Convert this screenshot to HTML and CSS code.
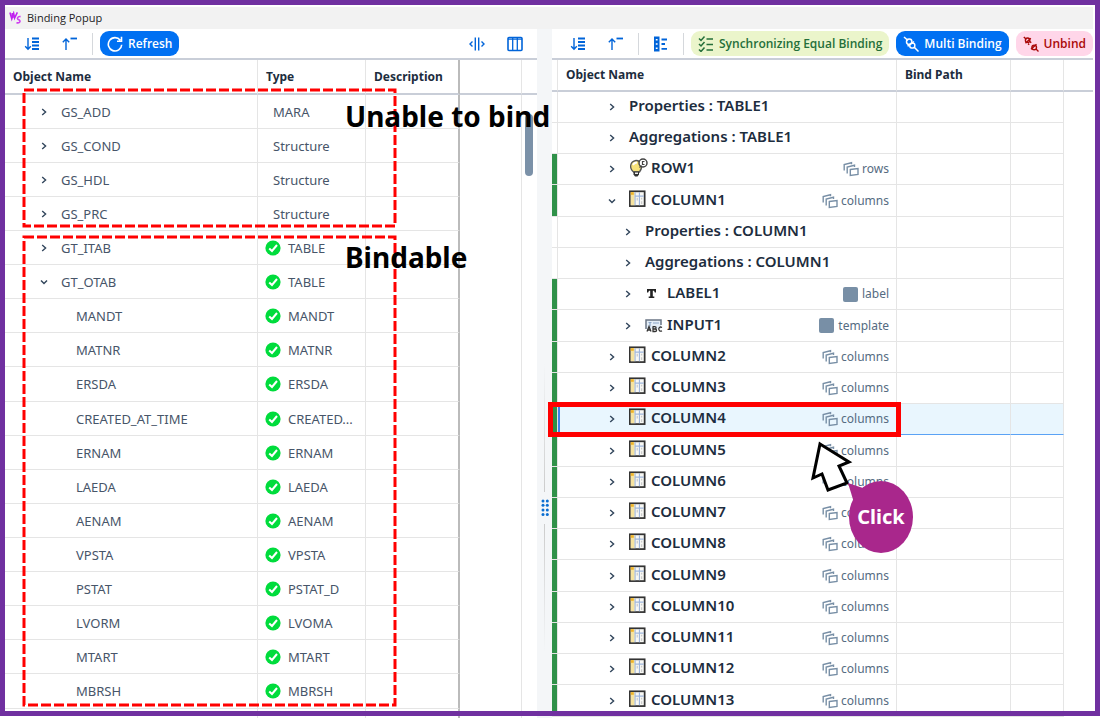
FILE: index.html
```html
<!DOCTYPE html>
<html lang="en">
<head>
<meta charset="utf-8">
<title>Binding Popup</title>
<link rel="stylesheet" href="styles.css">
</head>
<body>
<svg class="defs" aria-hidden="true">
  <symbol id="right" viewBox="0 0 8 8"><path d="M2.2 1 5.6 4 2.2 7" fill="none" stroke="currentColor" stroke-width="1.4"/></symbol>
  <symbol id="down" viewBox="0 0 8 8"><path d="M1 2.4 4 5.6 7 2.4" fill="none" stroke="currentColor" stroke-width="1.4"/></symbol>
  <symbol id="ok" viewBox="0 0 16 16"><circle cx="8" cy="8" r="7.6" fill="#00dc3c"/><path d="M4.2 8.4 7 11l5-6" fill="none" stroke="#fff" stroke-width="2"/></symbol>
  <symbol id="expand" viewBox="0 0 16 16"><g fill="none" stroke="currentColor" stroke-width="1.4"><path d="M4 2v11M1.2 10.2 4 13.2l2.800-3"/><path d="M8 2.500h7M8 6h7M8 9.500h7M8 13h7" stroke-width="1.800"/></g></symbol>
  <symbol id="collapse" viewBox="0 0 16 16"><g fill="none" stroke="currentColor" stroke-width="1.400"><path d="M4 14V3M.8 6.200 4 3l3.200 3.200"/><path d="M8.500 2.500H15" stroke-width="1.800"/></g></symbol>
  <symbol id="list" viewBox="0 0 16 16"><path d="M1 .5h5.500v15H1z" fill="currentColor"/><path d="M2.800 3h1.800v1.500H2.800zM2.800 7.200h1.800v1.500H2.800zM2.800 11.400h1.800v1.500H2.800z" fill="#fff"/><path d="M8.500 3.500H14M8.500 8H12M8.500 12.800H14" stroke="currentColor" stroke-width="1.800"/></symbol>
  <symbol id="grid" viewBox="1 1 23 23"><rect x="2" y="2.500" width="17" height="17" fill="#f8f8f4" stroke="#333" stroke-width="2"/><path d="M3 3.500h4.500v15H3z" fill="#f6e3a0"/><path d="M3 3.500h3.500v3H3z" fill="#f0b428"/><path d="M8 3.500v15M13 3.500v15M8 8h10" stroke="#9fb6dc" stroke-width="1.300"/><path d="M15.500 10v2M15.500 14v3M10.500 10v3" stroke="#ccc" stroke-width="1.500"/></symbol>
  <symbol id="stack" viewBox="0 0 16 16"><g fill="none" stroke="#788fa6" stroke-width="1.400"><path d="M1.200 9.500V3.500L8.500 1.700v1.500"/><path d="M4.200 12.500V6l7.300-1.800V6"/><path d="M7.300 8.500 15 7.500v6l-7.700 1z"/></g></symbol>
  <symbol id="link" viewBox="0 0 16 16"><g fill="none" stroke="currentColor" stroke-width="1.500"><path d="M1 1l4 3.500M11.500 11.500l4 4"/><circle cx="6.200" cy="5.700" r="2.700"/><path d="M8.500 7.500 11 5.500M5.500 8.500 5 10.500"/><rect x="6.800" y="7.300" width="5" height="4.600" rx="1.800"/></g></symbol>
</svg>

<div class="app">
  <header class="titlebar">
    <svg class="logo" viewBox="0 0 14 14" aria-hidden="true"><path d="M1 1l2 7 2-6 1 5 3-6M3.500 1.500 4 7" fill="none" stroke="#c020f0" stroke-width="1.700"/><path d="M12.500 5.500C9 5 8 8 10.500 9s1.500 4-2.500 3" fill="none" stroke="#d040f0" stroke-width="1.700"/></svg>
    <h1>Binding Popup</h1>
  </header>

  <main class="split">
    <section class="pane">
      <div class="toolbar">
        <button class="icon-btn" aria-label="Expand"><svg class="i16"><use href="#expand"/></svg></button>
        <button class="icon-btn" aria-label="Collapse"><svg class="i16"><use href="#collapse"/></svg></button>
        <span class="sep"></span>
        <button class="btn primary"><svg class="i16" viewBox="0 0 16 16"><path d="M13.300 4.200A6.700 6.700 0 1 0 14.700 8.700M14.500 .8v4.400H10" fill="none" stroke="currentColor" stroke-width="1.600"/></svg>Refresh</button>
        <span class="spacer"></span>
        <button class="icon-btn" aria-label="Fit columns"><svg class="i16" viewBox="0 0 16 16"><path d="M6.300 1.500v13M9.700 1.500v13M3.500 5.500 1 8l2.500 2.500M12.500 5.500 15 8l-2.500 2.500" fill="none" stroke="currentColor" stroke-width="1.400"/></svg></button>
        <button class="icon-btn" aria-label="Columns"><svg class="i16" viewBox="0 0 16 16"><rect x="1" y="1.500" width="14" height="13" rx="1" fill="none" stroke="currentColor" stroke-width="1.600"/><path d="M1 3.200h14M5.700 2v12M10.300 2v12" fill="none" stroke="currentColor" stroke-width="1.300"/></svg></button>
      </div>
      <table class="source">
        <colgroup><col><col class="c-type"><col class="c-desc"><col class="c-fill"><col class="c-scroll"></colgroup>
        <thead><tr><th>Object Name</th><th>Type</th><th>Description</th><td></td><td></td></tr></thead>
        <tbody>
          <tr><td><div class="node"><button class="tw" aria-label="Toggle"><svg><use href="#right"/></svg></button>GS_ADD</div></td><td class="plain">MARA</td><td></td><td></td><td></td></tr>
          <tr><td><div class="node"><button class="tw" aria-label="Toggle"><svg><use href="#right"/></svg></button>GS_COND</div></td><td class="plain">Structure</td><td></td><td></td><td></td></tr>
          <tr><td><div class="node"><button class="tw" aria-label="Toggle"><svg><use href="#right"/></svg></button>GS_HDL</div></td><td class="plain">Structure</td><td></td><td></td><td></td></tr>
          <tr><td><div class="node"><button class="tw" aria-label="Toggle"><svg><use href="#right"/></svg></button>GS_PRC</div></td><td class="plain">Structure</td><td></td><td></td><td></td></tr>
          <tr><td><div class="node"><button class="tw" aria-label="Toggle"><svg><use href="#right"/></svg></button>GT_ITAB</div></td><td><div class="kind"><svg class="i16"><use href="#ok"/></svg>TABLE</div></td><td></td><td></td><td></td></tr>
          <tr><td><div class="node"><button class="tw" aria-label="Toggle"><svg><use href="#down"/></svg></button>GT_OTAB</div></td><td><div class="kind"><svg class="i16"><use href="#ok"/></svg>TABLE</div></td><td></td><td></td><td></td></tr>
          <tr><td class="leaf">MANDT</td><td><div class="kind"><svg class="i16"><use href="#ok"/></svg>MANDT</div></td><td></td><td></td><td></td></tr>
          <tr><td class="leaf">MATNR</td><td><div class="kind"><svg class="i16"><use href="#ok"/></svg>MATNR</div></td><td></td><td></td><td></td></tr>
          <tr><td class="leaf">ERSDA</td><td><div class="kind"><svg class="i16"><use href="#ok"/></svg>ERSDA</div></td><td></td><td></td><td></td></tr>
          <tr><td class="leaf">CREATED_AT_TIME</td><td><div class="kind"><svg class="i16"><use href="#ok"/></svg>CREATED...</div></td><td></td><td></td><td></td></tr>
          <tr><td class="leaf">ERNAM</td><td><div class="kind"><svg class="i16"><use href="#ok"/></svg>ERNAM</div></td><td></td><td></td><td></td></tr>
          <tr><td class="leaf">LAEDA</td><td><div class="kind"><svg class="i16"><use href="#ok"/></svg>LAEDA</div></td><td></td><td></td><td></td></tr>
          <tr><td class="leaf">AENAM</td><td><div class="kind"><svg class="i16"><use href="#ok"/></svg>AENAM</div></td><td></td><td></td><td></td></tr>
          <tr><td class="leaf">VPSTA</td><td><div class="kind"><svg class="i16"><use href="#ok"/></svg>VPSTA</div></td><td></td><td></td><td></td></tr>
          <tr><td class="leaf">PSTAT</td><td><div class="kind"><svg class="i16"><use href="#ok"/></svg>PSTAT_D</div></td><td></td><td></td><td></td></tr>
          <tr><td class="leaf">LVORM</td><td><div class="kind"><svg class="i16"><use href="#ok"/></svg>LVOMA</div></td><td></td><td></td><td></td></tr>
          <tr><td class="leaf">MTART</td><td><div class="kind"><svg class="i16"><use href="#ok"/></svg>MTART</div></td><td></td><td></td><td></td></tr>
          <tr><td class="leaf">MBRSH</td><td><div class="kind"><svg class="i16"><use href="#ok"/></svg>MBRSH</div></td><td></td><td></td><td></td></tr>
          <tr><td></td><td></td><td></td><td></td><td></td></tr>
        </tbody>
      </table>
      <span class="thumb"></span>
    </section>

    <div class="splitter" role="separator">
      <span class="rail top"></span>
      <svg class="grip" viewBox="0 0 8 18" aria-hidden="true"><g fill="#0a6ed1"><circle cx="2" cy="2" r="1.500"/><circle cx="6.300" cy="2" r="1.500"/><circle cx="2" cy="6.300" r="1.500"/><circle cx="6.300" cy="6.300" r="1.500"/><circle cx="2" cy="11" r="1.500"/><circle cx="6.300" cy="11" r="1.500"/><circle cx="2" cy="15.500" r="1.500"/><circle cx="6.300" cy="15.500" r="1.500"/></g></svg>
      <span class="rail bottom"></span>
    </div>

    <section class="pane">
      <div class="toolbar target-bar">
        <button class="icon-btn" aria-label="Expand"><svg class="i16"><use href="#expand"/></svg></button>
        <button class="icon-btn" aria-label="Collapse"><svg class="i16"><use href="#collapse"/></svg></button>
        <span class="sep"></span>
        <button class="icon-btn" aria-label="List"><svg class="i16"><use href="#list"/></svg></button>
        <span class="sep"></span>
        <button class="btn sync"><svg class="i16" viewBox="0 0 16 16"><path d="M1 2.500l2 2L6.500 .5M1 8l2 2 3.500-4M1 13.500l2 2 3.500-4M8.500 3H15M8.500 8.500H15M8.500 14H15" fill="none" stroke="currentColor" stroke-width="1.500"/></svg>Synchronizing Equal Binding</button>
        <button class="btn primary"><svg class="i16"><use href="#link"/></svg>Multi Binding</button>
        <button class="btn unbind"><svg class="i16" viewBox="0 0 16 16"><g fill="none" stroke="currentColor" stroke-width="1.400"><path d="M.8 1l2.500 2.200M13 13l2.500 2.500"/><circle cx="4.600" cy="4.200" r="2.200"/><path d="M2.500 7.200 7.800 2.200M7 5.500l1.200 1.200M5 7.500l1.200 1.200M8 13.200l5.500-5"/><circle cx="11.200" cy="11.400" r="2.300"/></g></svg>Unbind</button>
      </div>
      <table class="target">
        <colgroup><col class="c-mark"><col><col class="c-path"><col class="c-act"><col class="c-edge"></colgroup>
        <thead><tr><td></td><th>Object Name</th><th>Bind Path</th><td></td><td></td></tr></thead>
        <tbody>
          <tr><td></td><td><div class="node"><button class="tw" aria-label="Toggle"><svg><use href="#right"/></svg></button><b>Properties : TABLE1</b></div></td><td></td><td></td><td></td></tr>
          <tr><td></td><td><div class="node"><button class="tw" aria-label="Toggle"><svg><use href="#right"/></svg></button><b>Aggregations : TABLE1</b></div></td><td></td><td></td><td></td></tr>
          <tr><td class="on"></td><td><div class="node"><button class="tw" aria-label="Toggle"><svg><use href="#right"/></svg></button><svg class="obj" viewBox="0 0 20 20"><path d="M4.500 14C0 10 .8 3.500 7 2.500c6 0 7 7 3.500 11.500z" fill="#f7e27a" stroke="#555" stroke-width="1.300"/><path d="M4 7c1-2 2-2.500 4-2.500" stroke="#fff" stroke-width="1.800" fill="none"/><path d="M4.500 13.500H10v3L8.500 18.500H6L4.500 16.500z" fill="#333"/><path d="M6 14.500h3v1.500H6z" fill="#eee"/><circle cx="14" cy="5" r="4" fill="#fff" stroke="#444" stroke-width="1.500"/><path d="M15.500 3.500h-2v3h2M10.500 9.500l2-2" stroke="#444" stroke-width="1.200" fill="none"/></svg><b>ROW1</b><span class="agg"><svg class="i16"><use href="#stack"/></svg>rows</span></div></td><td></td><td></td><td></td></tr>
          <tr><td class="on"></td><td><div class="node"><button class="tw" aria-label="Toggle"><svg><use href="#down"/></svg></button><svg class="obj"><use href="#grid"/></svg><b>COLUMN1</b><span class="agg"><svg class="i16"><use href="#stack"/></svg>columns</span></div></td><td></td><td></td><td></td></tr>
          <tr><td></td><td><div class="node deep"><button class="tw" aria-label="Toggle"><svg><use href="#right"/></svg></button><b>Properties : COLUMN1</b></div></td><td></td><td></td><td></td></tr>
          <tr><td></td><td><div class="node deep"><button class="tw" aria-label="Toggle"><svg><use href="#right"/></svg></button><b>Aggregations : COLUMN1</b></div></td><td></td><td></td><td></td></tr>
          <tr><td class="on"></td><td><div class="node deep"><button class="tw" aria-label="Toggle"><svg><use href="#right"/></svg></button><svg class="obj" viewBox="0 0 20 20"><path d="M2 6h9v3.500H9.800L9 7.800H7.800v5.700H9.300V15H3.700v-1.500h1.500V7.800H4L3.200 9.500H2z" fill="#222"/></svg><b>LABEL1</b><span class="agg"><i class="box"></i>label</span></div></td><td></td><td></td><td></td></tr>
          <tr><td class="on"></td><td><div class="node deep"><button class="tw" aria-label="Toggle"><svg><use href="#right"/></svg></button><svg class="obj" viewBox="0 0 20 20"><path d="M1 5h15v9H1z" fill="#e3edf7"/><path d="M1 14V5h15v5" fill="none" stroke="#6b7685" stroke-width="1.500"/><path d="M3.500 7.500h3M5 7.500v4M8 8h6" stroke="#8ba6c8" stroke-width="1.200"/><path d="M2 16.500l2-5 2 5M3 15h2.500M8 11.300v5.200h2.200c1.800 0 1.800-2.500 0-2.500H8M8 11.700h1.800c1.700 0 1.700 2.300 0 2.300M17 12.500c-4-2.500-4.500 5 0 3.300" fill="none" stroke="#333" stroke-width="1.300"/></svg><b>INPUT1</b><span class="agg"><i class="box"></i>template</span></div></td><td></td><td></td><td></td></tr>
          <tr><td class="on"></td><td><div class="node"><button class="tw" aria-label="Toggle"><svg><use href="#right"/></svg></button><svg class="obj"><use href="#grid"/></svg><b>COLUMN2</b><span class="agg"><svg class="i16"><use href="#stack"/></svg>columns</span></div></td><td></td><td></td><td></td></tr>
          <tr><td class="on"></td><td><div class="node"><button class="tw" aria-label="Toggle"><svg><use href="#right"/></svg></button><svg class="obj"><use href="#grid"/></svg><b>COLUMN3</b><span class="agg"><svg class="i16"><use href="#stack"/></svg>columns</span></div></td><td></td><td></td><td></td></tr>
          <tr class="selected"><td class="on"></td><td><div class="node"><button class="tw" aria-label="Toggle"><svg><use href="#right"/></svg></button><svg class="obj"><use href="#grid"/></svg><b>COLUMN4</b><span class="agg"><svg class="i16"><use href="#stack"/></svg>columns</span></div></td><td></td><td></td><td></td></tr>
          <tr><td class="on"></td><td><div class="node"><button class="tw" aria-label="Toggle"><svg><use href="#right"/></svg></button><svg class="obj"><use href="#grid"/></svg><b>COLUMN5</b><span class="agg"><svg class="i16"><use href="#stack"/></svg>columns</span></div></td><td></td><td></td><td></td></tr>
          <tr><td class="on"></td><td><div class="node"><button class="tw" aria-label="Toggle"><svg><use href="#right"/></svg></button><svg class="obj"><use href="#grid"/></svg><b>COLUMN6</b><span class="agg"><svg class="i16"><use href="#stack"/></svg>columns</span></div></td><td></td><td></td><td></td></tr>
          <tr><td class="on"></td><td><div class="node"><button class="tw" aria-label="Toggle"><svg><use href="#right"/></svg></button><svg class="obj"><use href="#grid"/></svg><b>COLUMN7</b><span class="agg"><svg class="i16"><use href="#stack"/></svg>columns</span></div></td><td></td><td></td><td></td></tr>
          <tr><td class="on"></td><td><div class="node"><button class="tw" aria-label="Toggle"><svg><use href="#right"/></svg></button><svg class="obj"><use href="#grid"/></svg><b>COLUMN8</b><span class="agg"><svg class="i16"><use href="#stack"/></svg>columns</span></div></td><td></td><td></td><td></td></tr>
          <tr><td class="on"></td><td><div class="node"><button class="tw" aria-label="Toggle"><svg><use href="#right"/></svg></button><svg class="obj"><use href="#grid"/></svg><b>COLUMN9</b><span class="agg"><svg class="i16"><use href="#stack"/></svg>columns</span></div></td><td></td><td></td><td></td></tr>
          <tr><td class="on"></td><td><div class="node"><button class="tw" aria-label="Toggle"><svg><use href="#right"/></svg></button><svg class="obj"><use href="#grid"/></svg><b>COLUMN10</b><span class="agg"><svg class="i16"><use href="#stack"/></svg>columns</span></div></td><td></td><td></td><td></td></tr>
          <tr><td class="on"></td><td><div class="node"><button class="tw" aria-label="Toggle"><svg><use href="#right"/></svg></button><svg class="obj"><use href="#grid"/></svg><b>COLUMN11</b><span class="agg"><svg class="i16"><use href="#stack"/></svg>columns</span></div></td><td></td><td></td><td></td></tr>
          <tr><td class="on"></td><td><div class="node"><button class="tw" aria-label="Toggle"><svg><use href="#right"/></svg></button><svg class="obj"><use href="#grid"/></svg><b>COLUMN12</b><span class="agg"><svg class="i16"><use href="#stack"/></svg>columns</span></div></td><td></td><td></td><td></td></tr>
          <tr><td class="on"></td><td><div class="node"><button class="tw" aria-label="Toggle"><svg><use href="#right"/></svg></button><svg class="obj"><use href="#grid"/></svg><b>COLUMN13</b><span class="agg"><svg class="i16"><use href="#stack"/></svg>columns</span></div></td><td></td><td></td><td></td></tr>
        </tbody>
      </table>
      <div class="focus-box"></div>
      <svg class="pointer" viewBox="0 0 44 52" aria-hidden="true"><path d="M10 4 39 22 29 26 37 43 18 50 12 34 3 38z" fill="#fff" stroke="#000" stroke-width="3"/></svg>
      <div class="callout"><svg viewBox="0 0 68 74" aria-hidden="true"><path d="M1 3 16 8 8 26z" fill="#a9278c"/><ellipse cx="34" cy="37" rx="32" ry="36" fill="#a9278c"/></svg><span>Click</span></div>
    </section>
  </main>

  <svg class="zone unbindable" aria-hidden="true"><rect class="dash" x="2" y="2" width="371" height="136"/></svg>
  <svg class="zone bindable" aria-hidden="true"><rect class="dash" x="2" y="2" width="371" height="468"/></svg>
  <p class="note note-unable">Unable to bind</p>
  <p class="note note-bindable">Bindable</p>
  <div class="frame"></div>
</div>
</body>
</html>
```
FILE: styles.css
```css
* { box-sizing: border-box; }

body {
  margin: 0;
  background: #fff;
  color: #32363a;
  font: 13px/18px "Noto Sans", "Open Sans", sans-serif;
}

.defs { display: none; }
svg { display: block; flex: none; }
.i16 { width: 16px; height: 16px; }

.app {
  position: relative;
  display: flex;
  flex-direction: column;
  height: 100vh;
  padding: 7px 7px 0 5px;
  overflow: hidden;
}

.frame {
  position: absolute;
  inset: 0 0 2px;
  border: 5px solid #7030a0;
  pointer-events: none;
}

.titlebar {
  display: flex;
  align-items: center;
  gap: 5px;
  flex: none;
  height: 22px;
  padding-left: 4px;
  background: #f2f2f2;
}
.titlebar h1 {
  margin: 0;
  color: #222;
  font: 11px/16px "Open Sans", sans-serif;
}
.logo { width: 13px; height: 14px; }

.split {
  display: grid;
  grid-template-columns: 532fr 15px 541fr;
  flex: 1;
  min-height: 0;
}
.pane { position: relative; min-width: 0; }

/* Toolbars */
.toolbar {
  display: flex;
  align-items: center;
  height: 31px;
  padding: 0 3px 0 8px;
  border-bottom: 2px solid #c9ced8;
}
.target-bar { padding: 0 0 0 7px; }
.spacer { flex: 1; }
.sep {
  flex: none;
  width: 1px;
  height: 22px;
  margin: 0 3px;
  background: #d5d8dc;
}
button {
  padding: 0;
  border: 0;
  background: none;
  color: inherit;
  font: inherit;
}
.icon-btn {
  display: flex;
  flex: none;
  align-items: center;
  justify-content: center;
  width: 38px;
  height: 24px;
  color: #0064d9;
}
.btn {
  display: flex;
  flex: none;
  align-items: center;
  gap: 5px;
  height: 25px;
  margin-left: 4px;
  padding: 0 7px;
  border-radius: 9px;
  font-weight: 600;
  font-size: 12px;
  font-family: "Open Sans", sans-serif;
  white-space: nowrap;
}
.btn + .btn { margin-left: 7px; }
.primary { background: #0070f2; color: #fff; }
.sync { background: #ebf5cb; color: #256f3a; }
.unbind { background: #ffd6e9; color: #aa0808; }

/* Tables */
table {
  width: 100%;
  border-spacing: 0;
  table-layout: fixed;
}
th, td {
  padding: 0;
  border-right: 1px solid #e5e5e5;
  border-bottom: 1px solid #e5e5e5;
  text-align: left;
  white-space: nowrap;
}
th {
  padding-left: 8px;
  color: #1d2d3e;
  font-weight: 700;
  font-size: 12px;
}
thead th, thead td { border-bottom: 2px solid #c9ced8; }
tr > :last-child { border-right: 0; }
tbody tr > :last-child { border-bottom: 0; }
.node { display: flex; align-items: center; }
.tw {
  display: flex;
  flex: none;
  align-items: center;
  justify-content: center;
  width: 16px;
  height: 16px;
  color: #32465c;
}
.tw svg { width: 8px; height: 8px; }

.c-type { width: 108px; }
.c-desc { width: 94px; }
.c-fill { width: 62px; }
.c-scroll { width: 15px; }
.source { color: #475569; }
.source thead tr { height: 35px; }
.source tbody tr { height: 34px; }
.source tbody tr:nth-child(9n) { height: 35px; }
.source tr > :nth-child(3) { border-right: 2px solid #bbb; }
.source tbody tr > :nth-child(4) { border-bottom: 0; }
.source .node { gap: 9px; padding-left: 31px; }
.source .leaf { padding-left: 71px; }
.source .plain { padding-left: 15px; }
.kind { display: flex; align-items: center; gap: 7px; padding-left: 7px; }

.c-mark { width: 6px; }
.c-path { width: 114px; }
.c-act { width: 53px; }
.c-edge { width: 29px; }
.target thead tr { height: 32px; }
.target tbody tr { height: 31px; }
.target tbody tr:nth-child(4n) { height: 32px; }
.target .on { background: #2f9149; }
.target .node { padding: 0 7px 0 46px; }
.target .deep { padding-left: 62px; }
.target .node .tw { margin-right: 9px; }
.target b {
  padding-bottom: 4px;
  color: #1d2d3e;
  font-weight: 600;
  font-size: 15px;
}
.obj { width: 20px; height: 20px; margin-right: 2px; margin-bottom: 2px; }
.agg {
  display: flex;
  align-items: center;
  gap: 3px;
  margin-left: auto;
  color: #556b82;
  font-size: 12px;
}
.box {
  width: 15px;
  height: 15px;
  margin-right: 1px;
  border-radius: 2px;
  background: #788fa6;
}
.selected td:not(.on):not(:last-child) {
  border-bottom-color: #5aa2f5;
  background: #e9f6fe;
}
.target .selected td:nth-child(2) {
  border-right-color: #0070f2;
  box-shadow: inset 2px 0 #3c82f0;
}

.thumb {
  position: absolute;
  top: 85px;
  right: 4px;
  width: 8px;
  height: 62px;
  border-radius: 4px;
  background: #7b91a8;
}

/* Splitter between the panes */
.splitter {
  display: flex;
  flex-direction: column;
  align-items: center;
  justify-content: center;
  gap: 7px;
  padding-top: 244px;
  background: #f4f6f8;
}
.rail { width: 1px; height: 128px; flex: none; }
.rail.top { background: linear-gradient(transparent, #ccc); }
.rail.bottom { background: linear-gradient(#ccc, transparent); }
.grip { width: 8px; height: 18px; }

/* Annotations over the tables */
.focus-box {
  position: absolute;
  top: 373px;
  left: -4px;
  right: 192px;
  height: 35px;
  border: 5px solid #f00;
}
.pointer {
  position: absolute;
  top: 411px;
  right: 239px;
  width: 44px;
  height: 52px;
}
.callout {
  position: absolute;
  top: 451px;
  right: 178px;
  display: grid;
  place-items: center;
  width: 68px;
  height: 74px;
}
.callout > * { grid-area: 1 / 1; }
.callout span {
  z-index: 1;
  color: #fff;
  font-weight: 700;
  font-size: 20px;
  line-height: 24px;
}
.zone { position: absolute; left: 22px; width: 375px; }
.unbindable { top: 88px; height: 140px; }
.bindable { top: 235px; height: 472px; }
.dash {
  fill: none;
  stroke: #f00;
  stroke-width: 3;
  stroke-dasharray: 10 3;
}
.note {
  position: absolute;
  left: 345px;
  margin: 0;
  color: #000;
  font-weight: 700;
  font-size: 28px;
  line-height: 36px;
  white-space: nowrap;
}
.note-unable { top: 98px; }
.note-bindable { top: 239px; }
```
